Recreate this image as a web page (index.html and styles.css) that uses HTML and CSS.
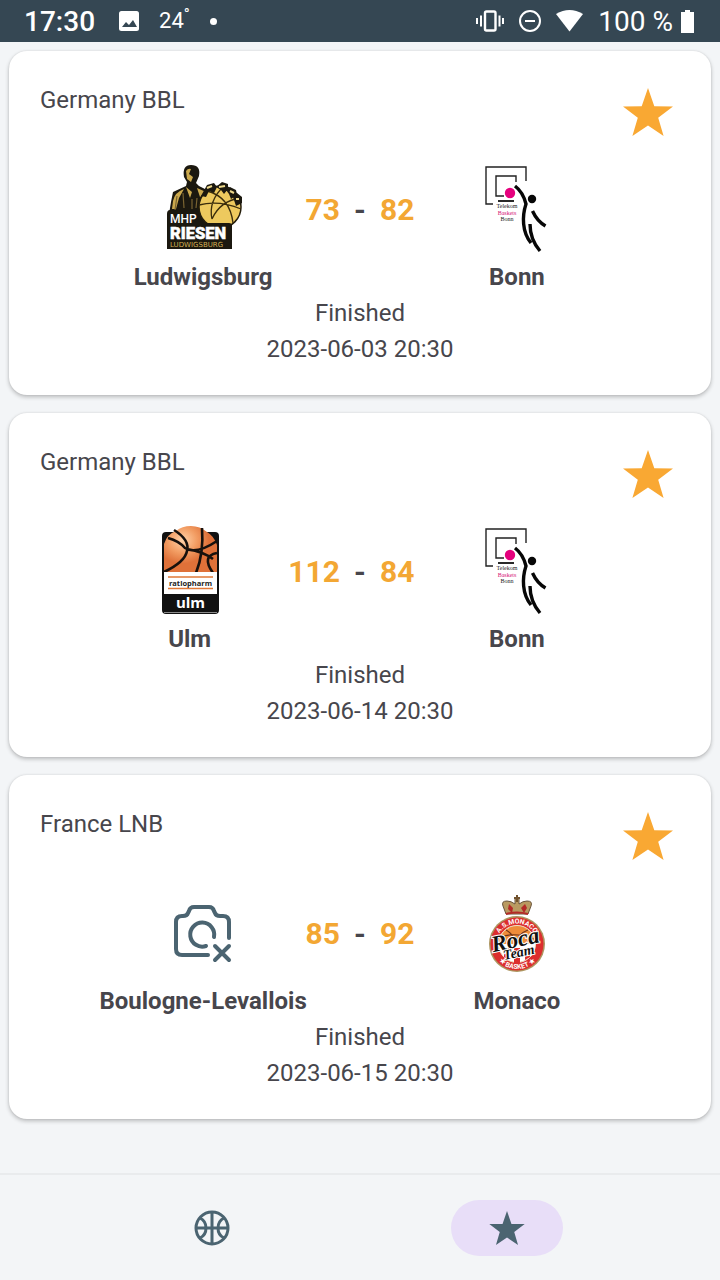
FILE: index.html
```html
<!DOCTYPE html>
<html lang="en">
<head>
<meta charset="utf-8">
<meta name="viewport" content="width=device-width, initial-scale=1">
<title>Favourite games</title>
<link rel="stylesheet" href="styles.css">
</head>
<body>
<header class="status">
  <div class="status-group">
    <span class="clock">17:30</span>
    <svg class="photo" viewBox="0 0 20 20"><rect width="20" height="20" rx="2.500" fill="#fff"/><path d="M3 16L7 11L10 14L14 9L18 16Z" fill="#354753"/></svg>
    <span class="temp">24<sup>°</sup></span>
    <span class="dot"></span>
  </div>
  <div class="status-group status-right">
    <svg class="vibrate" viewBox="0 0 28 22" fill="none" stroke="#fff"><rect x="9" y="1.500" width="10.500" height="19" rx="1.500" stroke-width="2.400"/><path d="M1 8V14M5 5.500V16.500M23.500 5.500V16.500M27 8V14" stroke-width="2"/></svg>
    <svg class="dnd" viewBox="0 0 22 22" fill="none" stroke="#fff" stroke-width="2"><circle cx="11" cy="11" r="10"/><path d="M6 11H16"/></svg>
    <svg class="wifi" viewBox="0 0 27 22"><path d="M0 4Q13.500-4 27 4L13.500 21.500Z" fill="#fff"/></svg>
    <div class="power">
      <span class="percent">100 %</span>
      <svg class="battery" viewBox="0 0 13 23"><path d="M4 0H9V2H13V23H0V2H4Z" fill="#fff"/></svg>
    </div>
  </div>
</header>

<main class="games">
  <article class="card">
    <div class="card-head"><h2 class="league">Germany BBL</h2><button class="fav" type="button" aria-label="Remove Ludwigsburg game from favourites"><svg viewBox="0 0 50 48"><path d="M25 0L31.3 18.2L50 18.4L35.2 29.8L40.6 48L25 37.4L9.4 48L14.8 29.8L0 18.4L18.7 18.2Z"/></svg></button></div>
    <div class="match">
      <div class="side">
        <div class="team">
          <svg class="logo" viewBox="0 0 90 96">
            <path d="M11 52L13 40L15 30L28 24L29 20L26 15Q24 3 33 3Q43 3 41 14L38 21L41 24L51 29L44 40V56H74V87H9V52Z" fill="#1b180f"/>
            <path d="M28 9Q30 6 33 7L31 12L35 15L33 20L29 17ZM15 39Q17 30 26 27L21 36L18 47H14ZM28 25L34 30L32 36ZM39 26L48 30L42 35Z" fill="#cba94d"/>
            <path d="M19 34L17 48M25 31L26 46M34 37V47M39 36L38 46" stroke="#796331" stroke-width="1.200" fill="none"/>
            <circle cx="62" cy="45" r="21" fill="#edc95e" stroke="#241d0b" stroke-width="1.500"/>
            <path d="M41 43Q61 38 83 47M49 29Q72 35 75 61M66 24Q50 39 54 57M82 36Q62 39 54 57" fill="none" stroke="#3b2d0c" stroke-width="1.300"/>
            <path d="M43 34L49 23L56 21L59 25L56 31L51 29L48 35ZM58 25L64 20L70 22L70 27L66 32L63 28ZM68 28L72 25L78 28L79 33L73 37L71 32ZM75 35L79 31L84 35L84 41L78 44Z" fill="#1b180f"/>
            <path d="M49 26L54 24M61 25L67 24M72 29L76 31M78 37L81 37" stroke="#eed98b" stroke-width="2"/>
            <path d="M9 52Q9 48 12 48H37Q41 48 41 52V61H71Q74 61 74 64V84Q74 87 71 87H12Q9 87 9 84Z" fill="#1b180f"/>
            <text class="logo-sans" x="12" y="61" font-size="12" font-weight="500" fill="#fff">MHP</text>
            <text class="logo-sans" x="12" y="77" font-size="16.500" font-weight="900" fill="#fff" stroke="#fff" stroke-width=".5">RIESEN</text>
            <text class="logo-wide" x="12" y="84.500" font-size="7" fill="#d4b054">LUDWIGSBURG</text>
          </svg>
          <span class="name">Ludwigsburg</span>
        </div>
        <span class="score">73</span>
      </div>
      <span class="dash">-</span>
      <div class="side away">
        <div class="team">
          <svg class="logo" viewBox="0 0 90 96">
            <path d="M21 42H14V5H54V19M32 34H24V14H44V20" fill="none" stroke="#222" stroke-width="1.400"/>
            <circle cx="38" cy="31" r="5.200" fill="#e5007d"/><path d="M26 39H42" stroke="#111" stroke-width="1.800"/>
            <path d="M43 24Q51 30 54 42C50 54 50 70 59 81M58 62C58 73 62 82 68 89M60.500 49Q65 59 73.500 64" fill="none" stroke="#070707" stroke-width="3.400"/>
            <circle cx="60" cy="37" r="4.200" fill="#070707"/>
            <g class="tiny-serif"><text x="35" y="46">Telekom</text><text x="35" y="52.500" fill="#d51378">Baskets</text><text x="35" y="59">Bonn</text></g>
          </svg>
          <span class="name">Bonn</span>
        </div>
        <span class="score">82</span>
      </div>
    </div>
    <p class="info">Finished</p>
    <p class="info"><time datetime="2023-06-03T20:30">2023-06-03 20:30</time></p>
  </article>

  <article class="card">
    <div class="card-head"><h2 class="league">Germany BBL</h2><button class="fav" type="button" aria-label="Remove Ulm game from favourites"><svg viewBox="0 0 50 48"><path d="M25 0L31.3 18.2L50 18.4L35.2 29.8L40.6 48L25 37.4L9.4 48L14.8 29.8L0 18.4L18.7 18.2Z"/></svg></button></div>
    <div class="match">
      <div class="side">
        <div class="team">
          <svg class="logo" viewBox="0 0 90 96">
            <defs><radialGradient id="ball" cx=".35" cy=".3"><stop offset="0" stop-color="#ffd2a9"/><stop offset=".55" stop-color="#f29c62"/><stop offset="1" stop-color="#df7139"/></radialGradient></defs>
            <rect x="17" y="8" width="57" height="82" rx="4" fill="#111"/>
            <path d="M19 49V20Q22 10 31 7Q37 2 46 2Q55 2 62 8Q69 12 72 21V49Z" fill="url(#ball)"/>
            <path d="M23 14Q34 17 40 24Q51 31 72 17M29 6Q45 16 42 27Q40 38 19 48M57 4Q59 29 51 49M72 29Q56 32 68 49M42 25Q59 28 68 35" fill="none" stroke="#17110d" stroke-width="2.600"/>
            <path d="M19 48H72V70H19Z" fill="#fff"/><path d="M23 53H68M23 64.500H68" stroke="#e17a38" stroke-width="1.300"/>
            <text x="45.500" y="61.500" font-size="7.500" text-anchor="middle" font-weight="700" fill="#222" class="logo-open">ratiopharm</text>
            <path d="M19 88.500H72" stroke="#aaa" stroke-width=".8"/>
            <text x="45.500" y="84" font-size="15" text-anchor="middle" font-weight="700" fill="#fff" class="logo-open">ulm</text>
          </svg>
          <span class="name">Ulm</span>
        </div>
        <span class="score">112</span>
      </div>
      <span class="dash">-</span>
      <div class="side away">
        <div class="team">
          <svg class="logo" viewBox="0 0 90 96">
            <path d="M21 42H14V5H54V19M32 34H24V14H44V20" fill="none" stroke="#222" stroke-width="1.400"/>
            <circle cx="38" cy="31" r="5.200" fill="#e5007d"/><path d="M26 39H42" stroke="#111" stroke-width="1.800"/>
            <path d="M43 24Q51 30 54 42C50 54 50 70 59 81M58 62C58 73 62 82 68 89M60.500 49Q65 59 73.500 64" fill="none" stroke="#070707" stroke-width="3.400"/>
            <circle cx="60" cy="37" r="4.200" fill="#070707"/>
            <g class="tiny-serif"><text x="35" y="46">Telekom</text><text x="35" y="52.500" fill="#d51378">Baskets</text><text x="35" y="59">Bonn</text></g>
          </svg>
          <span class="name">Bonn</span>
        </div>
        <span class="score">84</span>
      </div>
    </div>
    <p class="info">Finished</p>
    <p class="info"><time datetime="2023-06-14T20:30">2023-06-14 20:30</time></p>
  </article>

  <article class="card">
    <div class="card-head"><h2 class="league">France LNB</h2><button class="fav" type="button" aria-label="Remove Monaco game from favourites"><svg viewBox="0 0 50 48"><path d="M25 0L31.3 18.2L50 18.4L35.2 29.8L40.6 48L25 37.4L9.4 48L14.8 29.8L0 18.4L18.7 18.2Z"/></svg></button></div>
    <div class="match">
      <div class="side">
        <div class="team">
          <svg class="logo" viewBox="0 0 90 96" fill="none" stroke="#4b6471" stroke-width="4" stroke-linecap="round" stroke-linejoin="round">
            <path d="M50 69H24Q18 69 18 63V36Q18 30 24 30H25Q29 30 30 27L31 25Q32 21 36 21H51Q55 21 56 25L57 27Q58 30 62 30H65Q71 30 71 36V52"/>
            <path d="M48 60A12 12 0 1 1 56 51M57 60L71 74M71 60L57 74"/>
          </svg>
          <span class="name">Boulogne-Levallois</span>
        </div>
        <span class="score">85</span>
      </div>
      <span class="dash">-</span>
      <div class="side away">
        <div class="team">
          <svg class="logo" viewBox="0 0 90 96">
            <path d="M34 28L31 20Q29 15 35 15Q39 15 43 18V12H47V18Q51 15 55 15Q61 15 59 20L56 28Z" fill="#b99a61" stroke="#69543c"/>
            <path d="M36 23L37 18L41 22L40 27ZM49 22L53 18L55 22L52 27Z" fill="#b42b28"/><path d="M45 9V16M42 12H48" stroke="#71532e" stroke-width="2"/>
            <path d="M34 28Q45 25 56 28" fill="none" stroke="#b42b28" stroke-width="2"/>
            <circle cx="45" cy="58" r="28" fill="#ad9660"/><circle cx="45" cy="58" r="26.500" fill="#dc2e2e"/>
            <circle cx="45" cy="58" r="18.500" fill="#fff" stroke="#eee0c3"/>
            <path d="M27 58A18 18 0 0 1 63 58Z" fill="#ee8c3a"/><path d="M34 44Q42 48 43 58M56 44Q45 48 45 58M28 52Q40 45 62 53" fill="none" stroke="#6f3518" stroke-width="1.200"/>
            <path d="M32 62H37V74L32 71ZM42 62H48V77H42ZM53 62H58V71L53 74Z" fill="#dc2e2e"/>
            <path id="arc-top" d="M24.500 58A20.500 20.500 0 0 1 65.500 58" fill="none"/><path id="arc-bottom" d="M20 58A25 25 0 0 0 70 58" fill="none"/>
            <g class="logo-sans" font-size="6.800" font-weight="700" fill="#fff" text-anchor="middle"><text><textPath href="#arc-top" startOffset="50%">A.S.MONACO</textPath></text><text><textPath href="#arc-bottom" startOffset="50%">★ BASKET ★</textPath></text></g>
            <g class="script" transform="rotate(-12 45 58)" text-anchor="middle"><text x="44" y="61" font-size="23">Roca</text><text x="45" y="71" font-size="14">Team</text></g>
          </svg>
          <span class="name">Monaco</span>
        </div>
        <span class="score">92</span>
      </div>
    </div>
    <p class="info">Finished</p>
    <p class="info"><time datetime="2023-06-15T20:30">2023-06-15 20:30</time></p>
  </article>
</main>

<nav class="tabs" aria-label="Main">
  <a class="tab" href="#games" aria-label="Games"><svg class="ball-icon" viewBox="0 0 36 36" fill="none" stroke="#4b6471" stroke-width="3"><circle cx="18" cy="18" r="16"/><path d="M18 2V34M2 18H34M6 8Q12 11 12 18T6 28M30 8Q24 11 24 18T30 28"/></svg></a>
  <a class="tab" href="#favourites" aria-label="Favourites" aria-current="page"><span class="pill"><svg class="star-icon" viewBox="0 0 50 48"><path d="M25 0L31.3 18.2L50 18.4L35.2 29.8L40.6 48L25 37.4L9.4 48L14.8 29.8L0 18.4L18.7 18.2Z"/></svg></span></a>
</nav>
</body>
</html>
```
FILE: styles.css
```css
* { box-sizing: border-box; }
body {
  margin: 0;
  min-height: 100vh;
  display: flex;
  flex-direction: column;
  background: #f3f5f7;
  color: #47464c;
  font-family: Roboto, sans-serif;
  font-size: 24px;
  line-height: 36px;
}
svg { display: block; flex: none; }

.status {
  display: flex;
  justify-content: space-between;
  height: 42px;
  padding: 0 26px 0 24px;
  background: #354753;
  color: #fff;
}
.status-group { display: flex; align-items: center; gap: 20px; }
.status-right { gap: 15px; }
.power { display: flex; align-items: center; gap: 8px; }
.clock, .percent { font-size: 28px; line-height: 40px; padding-top: 2px; }
.clock { font-weight: 500; padding-right: 4px; }
.photo { width: 20px; height: 20px; }
.temp { font-size: 22px; }
.temp sup { font-size: 16px; line-height: 0; vertical-align: 8px; }
.dot { width: 7px; height: 7px; border-radius: 50%; background: #fff; }
.vibrate { width: 28px; height: 22px; }
.dnd { width: 22px; height: 22px; }
.wifi { width: 27px; height: 22px; }
.battery { width: 13px; height: 23px; }

.games { flex: 1; display: flex; flex-direction: column; gap: 18px; padding: 9px 9px 53px; }
.card {
  padding: 31px 0 28px;
  border-radius: 18px;
  background: #fff;
  box-shadow: 0 2px 4px rgba(0, 0, 0, .24), 0 0 2px rgba(0, 0, 0, .1);
}
.card-head { display: flex; justify-content: space-between; padding: 0 38px 0 31px; }
.league { margin: 0; font-size: 24px; font-weight: 400; }
.fav { padding: 6px 0 0; border: 0; background: none; fill: #f9a833; cursor: pointer; }
.fav svg { width: 50px; height: 48px; }

.match { display: flex; justify-content: center; padding: 25px 21px 0; }
.side { flex: 1; display: flex; }
.away { flex-direction: row-reverse; }
.side::before { content: ""; flex: 25; }
.team { flex: none; width: 150px; display: flex; flex-direction: column; align-items: center; }
.logo { width: 90px; height: 98px; }
.name { font-weight: 700; white-space: nowrap; }
.score, .dash { height: 98px; font-size: 30px; font-weight: 700; line-height: 98px; }
.score { flex: 7 0 auto; text-align: right; color: #f3a733; }
.away .score { text-align: left; }
.dash { width: 40px; text-align: center; }
.info { margin: 0; text-align: center; }

.tabs {
  display: flex;
  height: 107px;
  padding: 0 66px 0 64px;
  align-items: center;
  border-top: 2px solid #e9ebed;
}
.tab { flex: 1; display: flex; justify-content: center; align-items: center; height: 56px; }
.pill { display: flex; justify-content: center; align-items: center; width: 112px; height: 56px; border-radius: 28px; background: #e8def8; }
.ball-icon { width: 36px; height: 36px; }
.star-icon { width: 36px; height: 34px; fill: #4b6471; }

.logo-sans { font-family: Roboto, sans-serif; }
.logo-open { font-family: "Open Sans", sans-serif; }
.logo-wide { font-family: "DejaVu Sans", sans-serif; }
.tiny-serif { font: 400 6px "Liberation Serif", serif; text-anchor: middle; fill: #222; }
.script { font-family: "Liberation Serif", serif; font-weight: 700; font-style: italic; fill: #111; stroke: #fff; stroke-width: 2px; paint-order: stroke; }
```
